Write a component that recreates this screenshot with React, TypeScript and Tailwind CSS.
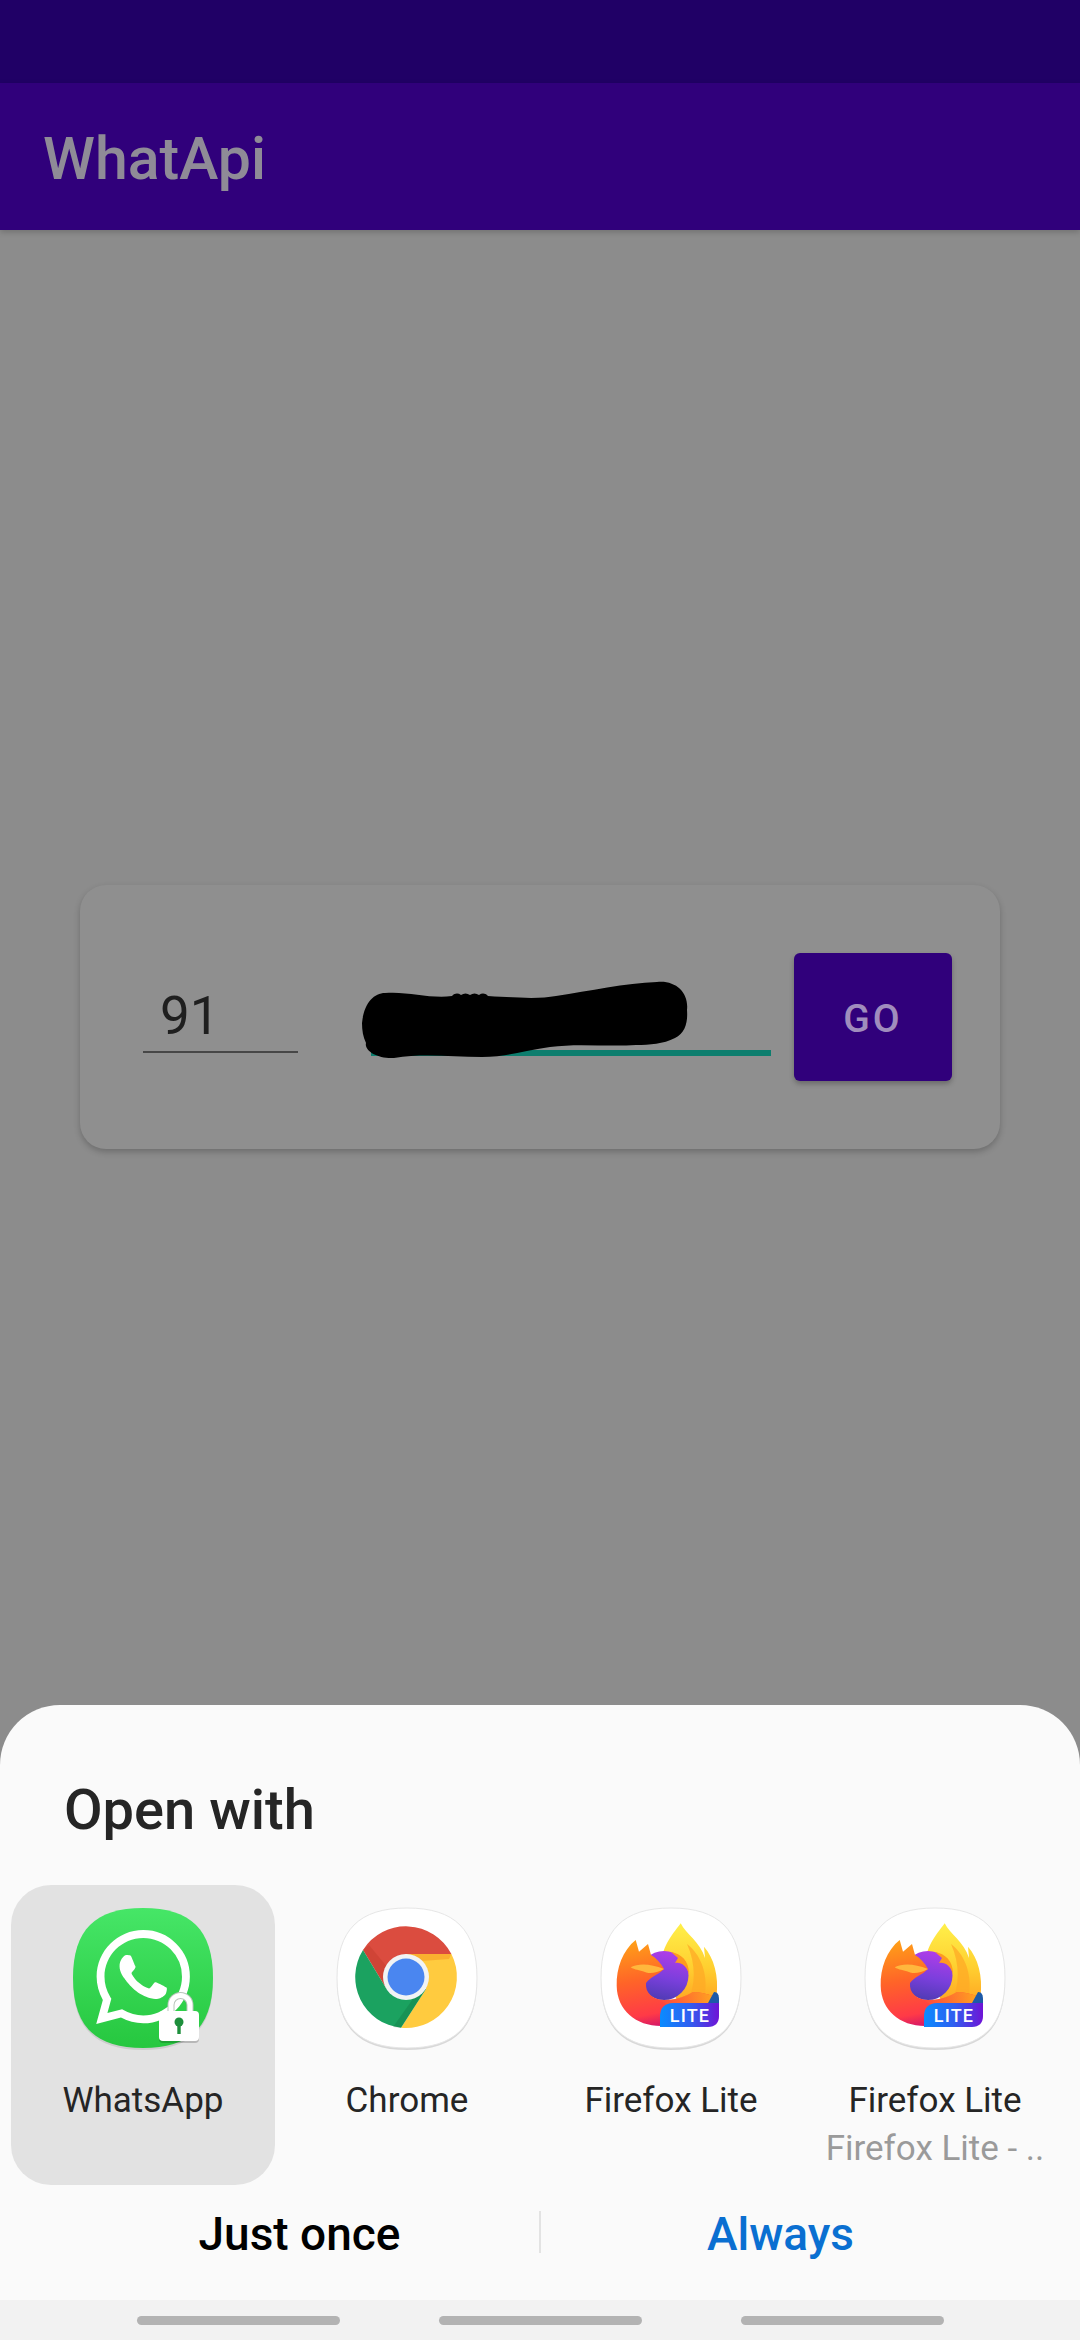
const SQUIRCLE = "M70 0C118 0 140 22 140 70C140 118 118 140 70 140C22 140 0 118 0 70C0 22 22 0 70 0Z";

const WHATSAPP_LOGO =
  "M17.472 14.382c-.297-.149-1.758-.867-2.03-.967-.273-.099-.471-.148-.67.15-.197.297-.767.966-.94 1.164-.173.199-.347.223-.644.075-.297-.15-1.255-.463-2.39-1.475-.883-.788-1.48-1.761-1.653-2.059-.173-.297-.018-.458.13-.606.134-.133.298-.347.446-.52.149-.174.198-.298.298-.497.099-.198.05-.371-.025-.52-.075-.149-.669-1.612-.916-2.207-.242-.579-.487-.5-.669-.51-.173-.008-.371-.01-.57-.01-.198 0-.52.074-.792.372-.272.297-1.04 1.016-1.04 2.479 0 1.462 1.065 2.875 1.213 3.074.149.198 2.096 3.2 5.077 4.487.709.306 1.262.489 1.694.625.712.227 1.36.195 1.871.118.571-.085 1.758-.719 2.006-1.413.248-.694.248-1.289.173-1.413-.074-.124-.272-.198-.57-.347m-5.421 7.403h-.004a9.87 9.87 0 01-5.031-1.378l-.361-.214-3.741.982.998-3.648-.235-.374a9.86 9.86 0 01-1.51-5.26c.001-5.45 4.436-9.884 9.888-9.884 2.64 0 5.122 1.03 6.988 2.898a9.825 9.825 0 012.893 6.994c-.003 5.45-4.437 9.884-9.885 9.884m8.413-18.297A11.815 11.815 0 0012.05 0C5.495 0 .16 5.335.157 11.892c0 2.096.547 4.142 1.588 5.945L.057 24l6.305-1.654a11.882 11.882 0 005.683 1.448h.005c6.554 0 11.89-5.335 11.893-11.893a11.821 11.821 0 00-3.48-8.413z";

function WhatsAppIcon() {
  return (
    <svg viewBox="-1 -1 142 146" className="h-[146px] w-[142px]">
      <defs>
        <linearGradient id="wa-bg" x1="0" y1="0" x2="0" y2="1">
          <stop offset="0" stopColor="#46e667" />
          <stop offset="1" stopColor="#26c73f" />
        </linearGradient>
      </defs>
      <path d={SQUIRCLE} fill="#00000018" transform="translate(0 2)" />
      <path d={SQUIRCLE} fill="url(#wa-bg)" />
      <g transform="translate(23 22) scale(3.92)">
        <path d={WHATSAPP_LOGO} fill="#fff" />
      </g>
      <path d="M98 106V97a9.5 9.5 0 0 1 19 0v9" fill="none" stroke="#b8c4ba" strokeWidth="7" />
      <path d="M98 106V97a9.5 9.5 0 0 1 19 0v9" fill="none" stroke="#fff" strokeWidth="5" />
      <rect x="86" y="103" width="40" height="31" rx="4" fill="#00000030" transform="translate(0 1)" />
      <rect x="86" y="103" width="40" height="30" rx="4" fill="#fff" />
      <circle cx="106" cy="114" r="4.5" fill="#1e8f3c" />
      <rect x="104.3" y="115" width="3.4" height="11" fill="#1e8f3c" />
    </svg>
  );
}

function ChromeIcon() {
  return (
    <svg viewBox="-1 -1 142 146" className="h-[146px] w-[142px]">
      <path d={SQUIRCLE} fill="#00000022" transform="translate(0 2)" />
      <path d={SQUIRCLE} fill="#fff" stroke="#e6e6e6" strokeWidth="1" />
      <path d="M26 42A51 51 0 0 1 114.4 46L69 46L49 80Z" fill="#db4c3f" />
      <path d="M114.4 46A51 51 0 0 1 64 119.8L89 81L69 46Z" fill="#ffcb3f" />
      <path d="M64 119.8A51 51 0 0 1 26 42L49 80L89 81Z" fill="#1ba260" />
      <path d="M26 42L49 80L56 66L32 37Z" fill="#a52714" opacity="0.2" />
      <path d="M69 46H114.4L112 51L85 53Z" fill="#ea6100" opacity="0.25" />
      <path d="M64 119.8L89 81L78 88L56 119Z" fill="#0b5b2f" opacity="0.22" />
      <circle cx="69" cy="69" r="23" fill="#f1f3f4" />
      <circle cx="69" cy="69" r="18.5" fill="#4a86f0" />
    </svg>
  );
}

function FirefoxIcon() {
  return (
    <svg viewBox="-1 -1 142 146" className="h-[146px] w-[142px]">
      <defs>
        <linearGradient id="ff-flame" x1="0.5" y1="0" x2="0.5" y2="1">
          <stop offset="0" stopColor="#fff04a" />
          <stop offset="0.5" stopColor="#ffcf30" />
          <stop offset="1" stopColor="#ff9a1f" />
        </linearGradient>
        <linearGradient id="ff-body" x1="0.25" y1="0" x2="0.45" y2="1">
          <stop offset="0" stopColor="#ff9f18" />
          <stop offset="0.45" stopColor="#ff6428" />
          <stop offset="0.85" stopColor="#ff3a47" />
          <stop offset="1" stopColor="#d41768" />
        </linearGradient>
        <linearGradient id="ff-belly" x1="0" y1="0" x2="1" y2="0">
          <stop offset="0" stopColor="#ff9a1f" stopOpacity="0" />
          <stop offset="1" stopColor="#ffa51f" />
        </linearGradient>
        <linearGradient id="ff-globe" x1="0.6" y1="0" x2="0.4" y2="1">
          <stop offset="0" stopColor="#b03de8" />
          <stop offset="0.55" stopColor="#7a3fdc" />
          <stop offset="1" stopColor="#4f3bb4" />
        </linearGradient>
        <linearGradient id="ff-badge" x1="0" y1="0" x2="1" y2="0">
          <stop offset="0" stopColor="#0a8cff" />
          <stop offset="0.5" stopColor="#2f5ff0" />
          <stop offset="1" stopColor="#6f14d6" />
        </linearGradient>
      </defs>
      <path d={SQUIRCLE} fill="#00000022" transform="translate(0 2)" />
      <path d={SQUIRCLE} fill="#fff" stroke="#e6e6e6" strokeWidth="1" />
      {/* back flame */}
      <path
        d="M79.7 15.3C85 26 99 34 104 50L103 38.7C113 50 118 68 115.5 88C110 104 96 108 80 100L60 60C60 40 70 28 79.7 15.3Z"
        fill="url(#ff-flame)"
      />
      <path d="M86 36C99 46 107 64 104 86C100 94 94 96 86 94C95 78 95 56 86 36Z" fill="#ffaa26" opacity="0.75" />
      {/* globe */}
      <circle cx="63" cy="67.5" r="24.5" fill="url(#ff-globe)" />
      <path d="M70 44C80 46 88 52 88 66C85 57 80 54 74 55L77 50Z" fill="#ff9a1f" />
      {/* fox body wrapping round the globe */}
      <path
        d="M34.7 32L38 43.7L47 36L50 47C55 50 60 55 63 61C57 67 49 69 45 75C44 85 52 92 64 92C76 92 85 88 92 84C99 84 106 86 112 88C104 106 82 118 60 118C35 118 16 102 15.7 78C15 60 22 42 34.7 32Z"
        fill="url(#ff-body)"
      />
      <path d="M58 91C70 94 82 89 92 84C99 84 106 86 112 88C108 96 102 102 96 106C82 104 68 100 58 91Z" fill="url(#ff-belly)" />
      <path d="M29.7 59.3C38 55 50 56 63 61C56 65 48 66 44 64C38 62 34 62 29.7 59.3Z" fill="#ffb73d" />
      {/* LITE badge */}
      <path d="M107 95L113 84C117 84 118 87 118 92V95Z" fill="#1d5aa8" />
      <path d="M72 95H118V108C118 115 114 119 107 119H59V108C59 100 64 95 72 95Z" fill="url(#ff-badge)" />
      <text
        x="89"
        y="113.5"
        textAnchor="middle"
        fill="#fff"
        fontSize="18"
        fontWeight="500"
        letterSpacing="1.2"
        fontFamily="Roboto, sans-serif"
      >
        LITE
      </text>
    </svg>
  );
}

const apps = [
  { name: "WhatsApp", icon: <WhatsAppIcon />, selected: true },
  { name: "Chrome", icon: <ChromeIcon /> },
  { name: "Firefox Lite", icon: <FirefoxIcon /> },
  { name: "Firefox Lite", sub: "Firefox Lite - ..", icon: <FirefoxIcon /> },
];

export default function App() {
  return (
    <div className="flex h-[2340px] w-[1080px] flex-col overflow-hidden bg-[#8c8c8c] font-['Roboto',sans-serif]">
      <div className="h-[83px] bg-[#200066]" />
      <header className="flex h-[147px] items-center bg-[#30007b] pt-[3px] pl-[43px] shadow-[0_2px_6px_rgba(0,0,0,0.2)]">
        <h1 className="text-[59px] leading-none font-medium text-[#8f8b97]">WhatApi</h1>
      </header>

      <main className="flex-1 pt-[655px] pl-[80px]">
        <div className="relative flex h-[264px] w-[920px] items-center rounded-[26px] bg-[#8f8f8f] pl-[63px] shadow-[0_3px_6px_rgba(0,0,0,0.22)]">
          <div className="flex h-[72px] w-[155px] items-end border-b-2 border-[#474747] pl-[17px]">
            <span className="text-[53px] leading-[70px] text-[#1f1f1f]">91</span>
          </div>
          <div className="ml-[73px] h-[78px] w-[400px] border-b-[6px] border-[#0d7e6e]" />
          <button
            type="button"
            className="ml-[23px] h-[128px] w-[158px] rounded-[6px] bg-[#30007b] pt-[5px] text-[39px] font-medium tracking-[3px] text-[#a08dbd] shadow-[0_3px_5px_rgba(0,0,0,0.25)]"
          >
            GO
          </button>
          {/* scribbled out phone number */}
          <svg viewBox="0 0 330 90" className="absolute top-[90px] left-[280px] h-[90px] w-[330px] blur-[0.6px]">
            <path
              d="M2 48C4 28 14 18 25 18C48 16 70 24 92 21C95 18 98 18 101 20C104 18 107 18 110 20C113 18 116 18 119 20C122 18 125 18 128 21C160 23 180 24 196 21C230 16 265 8 297 7C316 5 329 18 327 35C328 48 325 58 315 63C303 69 290 70 276 70C247 72 218 68 190 72C168 75 146 82 122 82C92 82 64 78 34 83C18 84 4 76 6 68C3 62 2 55 2 48Z"
              fill="#000"
            />
          </svg>
        </div>
      </main>

      <section className="flex flex-col rounded-t-[60px] bg-[#fafafa]">
        <h2 className="h-[180px] pt-[70px] pl-[64px] text-[56px] leading-[70px] font-medium text-[#252525]">
          Open with
        </h2>

        <div className="grid h-[300px] grid-cols-[repeat(4,264px)] pl-[11px]">
          {apps.map((app, i) => (
            <div
              key={i}
              className={`flex flex-col items-center rounded-[40px] pt-[22px] ${app.selected ? "bg-[#e2e2e2]" : ""}`}
            >
              {app.icon}
              <span className="mt-[26px] text-[35px] leading-[44px] text-[#252525]">{app.name}</span>
              {app.sub && (
                <span className="mt-[4px] text-[35px] leading-[44px] whitespace-nowrap text-[#9a9a9a]">{app.sub}</span>
              )}
            </div>
          ))}
        </div>

        <div className="flex h-[115px] items-start px-[60px] pt-[28px]">
          <button type="button" className="h-[42px] flex-1 text-[46px] leading-[42px] font-medium text-black">
            Just once
          </button>
          <div className="-mt-[2px] h-[42px] w-[2px] bg-[#e3e3e3]" />
          <button type="button" className="h-[42px] flex-1 text-[46px] leading-[42px] font-medium text-[#0a6fd1]">
            Always
          </button>
        </div>

        <nav className="flex h-[40px] justify-center gap-[99px] bg-[#f2f2f2] pt-[16px]">
          <div className="h-[9px] w-[203px] rounded-full bg-[#b3b3b3]" />
          <div className="h-[9px] w-[203px] rounded-full bg-[#b3b3b3]" />
          <div className="h-[9px] w-[203px] rounded-full bg-[#b3b3b3]" />
        </nav>
      </section>
    </div>
  );
}
